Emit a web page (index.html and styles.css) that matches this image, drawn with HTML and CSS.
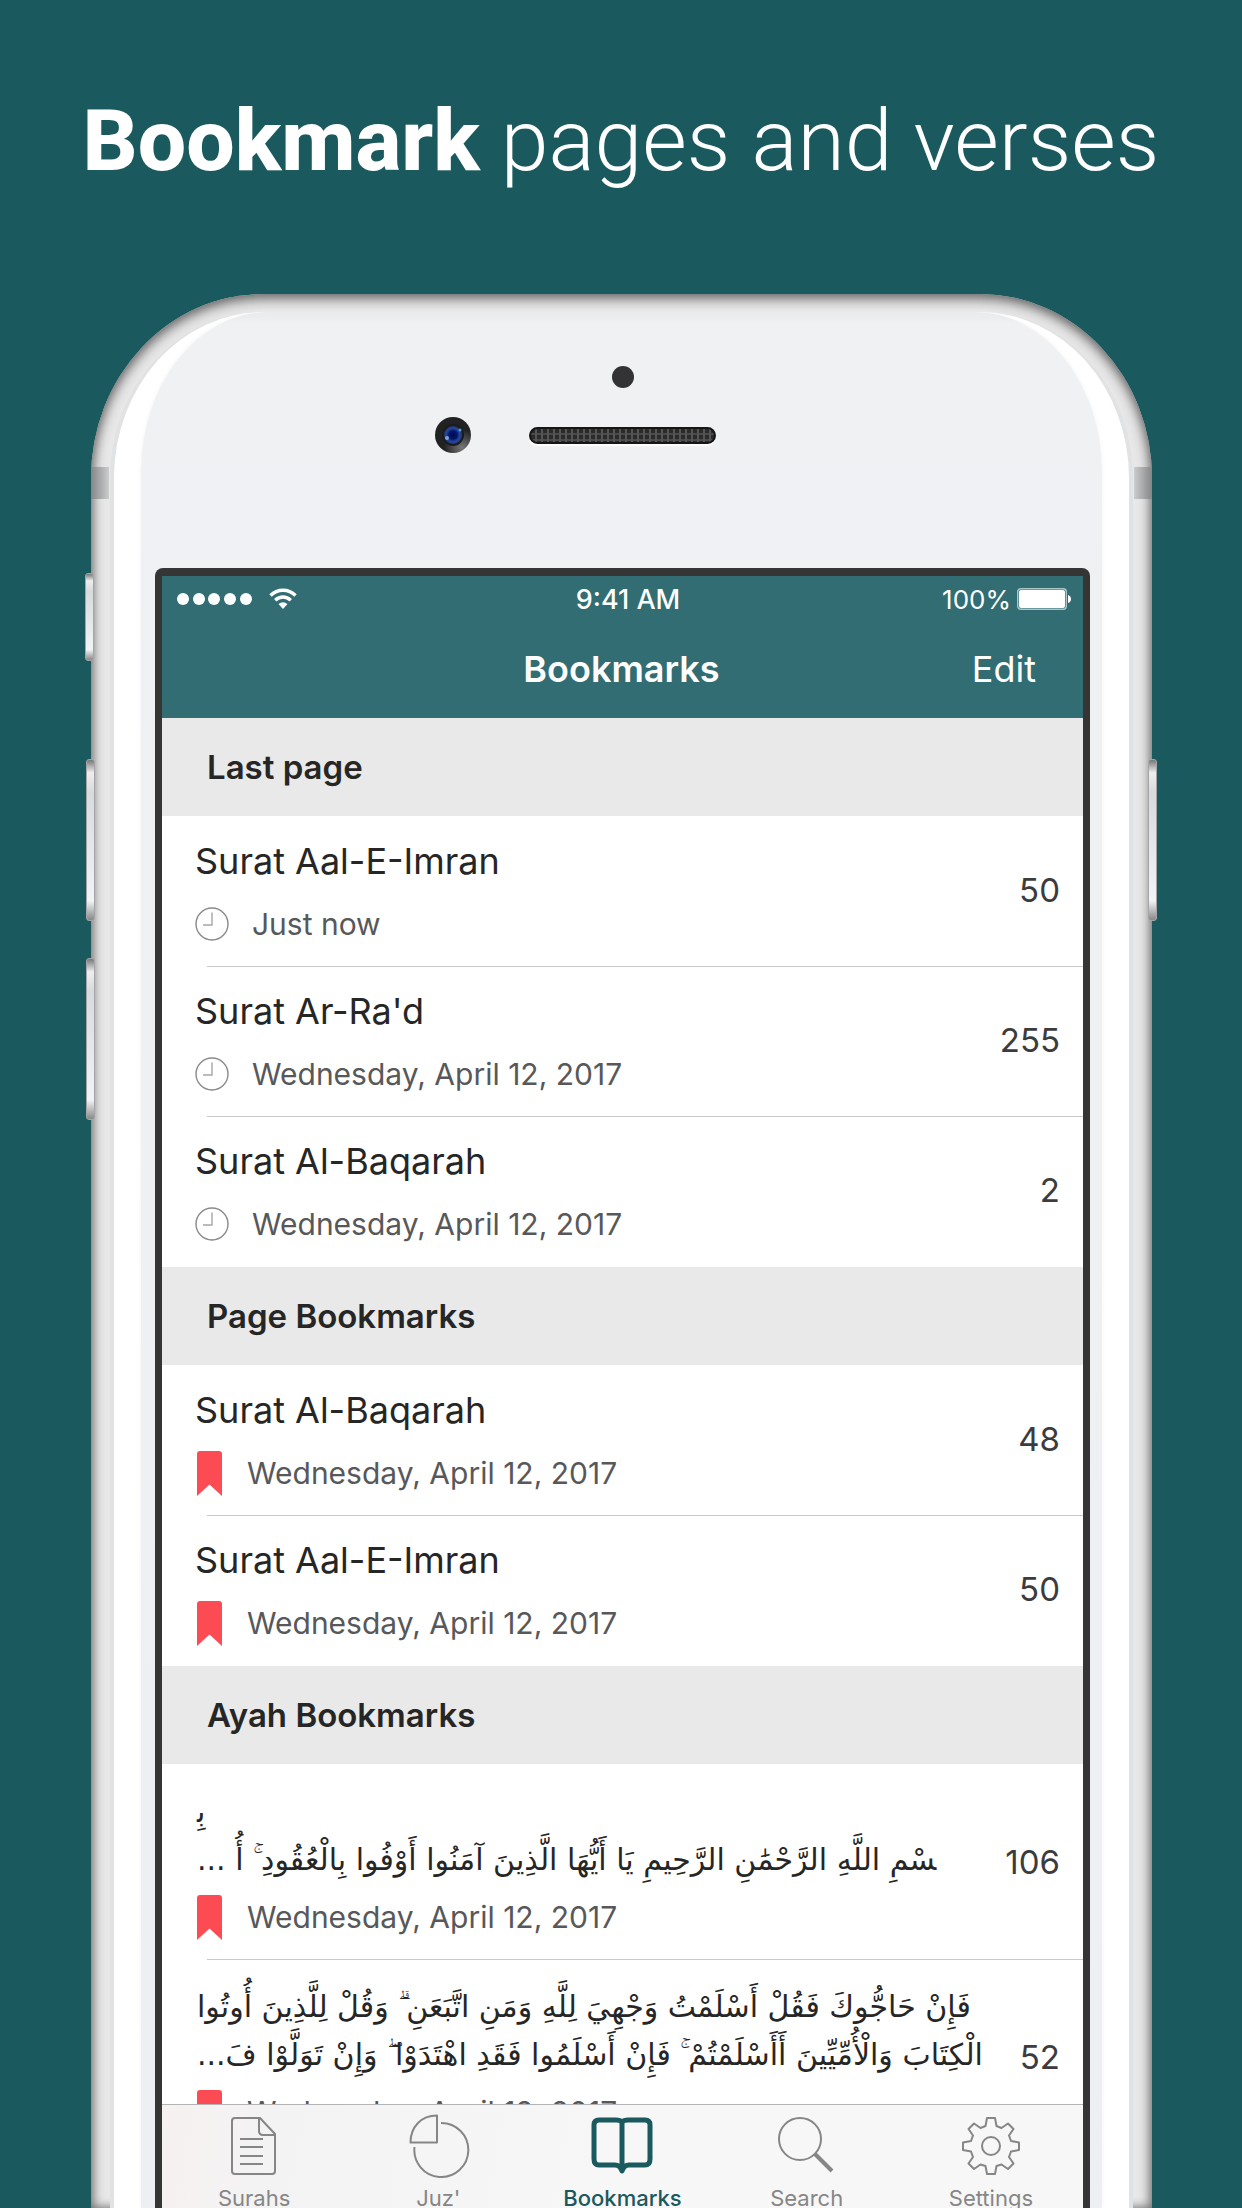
FILE: index.html
```html
<!DOCTYPE html>
<html lang="en">
<head>
<meta charset="utf-8">
<meta name="viewport" content="width=device-width, initial-scale=1">
<title>Bookmark pages and verses</title>
<link rel="stylesheet" href="styles.css">
</head>
<body>
<svg class="sprite" aria-hidden="true">
  <symbol id="clock" viewBox="0 0 34 34"><circle cx="17" cy="17" r="16" fill="none" stroke="#8a8a8a" stroke-width="1.4"/><path d="M17 5.500V18H8" fill="none" stroke="#a5a5a5" stroke-width="1.400"/></symbol>
  <symbol id="ribbon" viewBox="0 0 25 45"><path d="M0 3Q0 0 3 0H22Q25 0 25 3V45L12.500 33.500 0 45Z" fill="#fd4b54"/></symbol>
</svg>
<main class="stage">
  <h1 class="headline"><strong>Bookmark</strong> pages and verses</h1>
  <div class="phone">
    <span class="key key-mute"></span>
    <span class="key key-up"></span>
    <span class="key key-down"></span>
    <span class="key key-power"></span>
    <span class="band band-left"></span>
    <span class="band band-right"></span>
    <div class="glass">
      <div class="face">
        <div class="forehead">
          <span class="sensor"></span>
          <svg class="camera" viewBox="0 0 36 36" aria-hidden="true">
            <defs>
              <radialGradient id="rim" cx=".75" cy=".85" r=".5"><stop offset="0" stop-color="#777"/><stop offset="1" stop-color="#222"/></radialGradient>
              <radialGradient id="lens"><stop offset="0" stop-color="#020c4a"/><stop offset=".45" stop-color="#04156a"/><stop offset=".75" stop-color="#2448a0"/><stop offset="1" stop-color="#24366c"/></radialGradient>
            </defs>
            <circle cx="18" cy="18" r="18" fill="url(#rim)"/><circle cx="18" cy="18" r="11" fill="#1c1c1e"/>
            <circle cx="18" cy="18" r="9" fill="url(#lens)"/><circle cx="12" cy="21" r="2" fill="#7aa4d8"/><circle cx="25" cy="13" r="1.500" fill="#5aa0d8"/>
          </svg>
          <span class="speaker"></span>
        </div>
        <div class="screen">
          <header class="topbar">
            <div class="status">
              <span class="signal">
                <svg width="76" height="12" viewBox="0 0 76 12" fill="#fff" aria-label="Signal"><circle cx="6" cy="6" r="6"/><circle cx="22" cy="6" r="6"/><circle cx="37" cy="6" r="6"/><circle cx="53" cy="6" r="6"/><circle cx="69" cy="6" r="6"/></svg>
                <svg width="28" height="22" viewBox="0 0 28 22" fill="none" stroke="#fff" stroke-width="3.400" aria-label="Wi-Fi"><path d="M1.500 7.500C8.500 0.500 19.500 0.500 26.500 7.500M6.200 12.200C10.800 7.900 17.200 7.900 21.800 12.200"/><path d="M9.500 16Q14 12.500 18.500 16L14 21Z" fill="#fff" stroke="none"/></svg>
              </span>
              <span class="time">9:41 AM</span>
              <span class="power">100%
                <svg width="54" height="22" viewBox="0 0 54 22" aria-label="Battery"><rect x=".7" y=".7" width="48.600" height="20.600" rx="3" fill="none" stroke="#aac6c8" stroke-width="1.400"/><rect x="2" y="2" width="46" height="18" rx="2" fill="#fff"/><path d="M51 7Q54 8 54 11T51 15Z" fill="#fff"/></svg>
              </span>
            </div>
            <nav class="navbar">
              <h2 class="nav-title">Bookmarks</h2>
              <button class="edit" type="button">Edit</button>
            </nav>
          </header>
          <div class="list">
            <section>
              <h3 class="section-title">Last page</h3>
              <ul class="rows">
                <li class="row"><div class="entry"><p class="name">Surat Aal-E-Imran</p><p class="meta"><svg class="clock"><use href="#clock"/></svg>Just now</p></div><span class="page">50</span></li>
                <li class="row"><div class="entry"><p class="name">Surat Ar-Ra'd</p><p class="meta"><svg class="clock"><use href="#clock"/></svg>Wednesday, April 12, 2017</p></div><span class="page">255</span></li>
                <li class="row"><div class="entry"><p class="name">Surat Al-Baqarah</p><p class="meta"><svg class="clock"><use href="#clock"/></svg>Wednesday, April 12, 2017</p></div><span class="page">2</span></li>
              </ul>
            </section>
            <section>
              <h3 class="section-title">Page Bookmarks</h3>
              <ul class="rows">
                <li class="row"><div class="entry"><p class="name">Surat Al-Baqarah</p><p class="meta"><svg class="ribbon"><use href="#ribbon"/></svg>Wednesday, April 12, 2017</p></div><span class="page">48</span></li>
                <li class="row"><div class="entry"><p class="name">Surat Aal-E-Imran</p><p class="meta"><svg class="ribbon"><use href="#ribbon"/></svg>Wednesday, April 12, 2017</p></div><span class="page">50</span></li>
              </ul>
            </section>
            <section>
              <h3 class="section-title">Ayah Bookmarks</h3>
              <ul class="rows">
                <li class="row row-ayah"><div class="entry"><p class="ayah" lang="ar" dir="rtl">بِ&zwj;<br>&zwj;سْمِ اللَّهِ الرَّحْمَٰنِ الرَّحِيمِ يَا أَيُّهَا الَّذِينَ آمَنُوا أَوْفُوا بِالْعُقُودِ ۚ أُ ...</p><p class="meta"><svg class="ribbon"><use href="#ribbon"/></svg>Wednesday, April 12, 2017</p></div><span class="page">106</span></li>
                <li class="row row-ayah"><div class="entry"><p class="ayah" lang="ar" dir="rtl">فَإِنْ حَاجُّوكَ فَقُلْ أَسْلَمْتُ وَجْهِيَ لِلَّهِ وَمَنِ اتَّبَعَنِ ۗ وَقُلْ لِلَّذِينَ أُوتُوا<br>الْكِتَابَ وَالْأُمِّيِّينَ أَأَسْلَمْتُمْ ۚ فَإِنْ أَسْلَمُوا فَقَدِ اهْتَدَوْا ۖ وَإِنْ تَوَلَّوْا فَ...</p><p class="meta"><svg class="ribbon"><use href="#ribbon"/></svg>Wednesday, April 12, 2017</p></div><span class="page">52</span></li>
              </ul>
            </section>
          </div>
          <nav class="tabs">
            <a class="tab" href="#surahs"><svg viewBox="0 0 64 64"><path d="M13 4H38L53 20V57Q53 60 50 60H13Q10 60 10 57V7Q10 4 13 4ZM37 4V17Q37 21 41 21H53M18 25H41M18 33H41M18 42H41M18 50H41"/></svg>Surahs</a>
            <a class="tab" href="#juz"><svg viewBox="0 0 64 64"><path d="M31 1.500V28.500H4.500C4.500 13 15 1.500 31 1.500ZM35 9A27 27 0 1 1 8.500 33"/></svg>Juz'</a>
            <a class="tab tab-active" href="#bookmarks"><svg viewBox="0 0 64 64"><path d="M32 8Q30 6 26 6H9Q4 6 4 11V45Q4 51 9 51H25Q30 51 32 57Q34 51 39 51H55Q60 51 60 45V11Q60 6 55 6H38Q34 6 32 8ZM32 8V56"/></svg>Bookmarks</a>
            <a class="tab" href="#search"><svg viewBox="0 0 64 64"><circle cx="25" cy="25" r="21"/><path d="M40 40L57 57" stroke-width="4"/></svg>Search</a>
            <a class="tab" href="#settings"><svg viewBox="0 0 64 64"><circle cx="32" cy="32" r="9"/><path d="M28 4H36L37.500 12L42.500 14L49 9.500L54.500 15L50 21.500L52 27L60 28.500V36L52 37.500L50 43L54.500 49.500L49 55L42.500 50.500L37.500 52L36 60H28L26.500 52L21.500 50.500L15 55L9.500 49.500L14 43L12 37.500L4 36V28.500L12 27L14 21.500L9.500 15L15 9.500L21.500 14L26.500 12Z"/></svg>Settings</a>
          </nav>
        </div>
      </div>
    </div>
  </div>
</main>
</body>
</html>
```
FILE: styles.css
```css
* { box-sizing: border-box; }
body, h1, h2, h3, p, ul { margin: 0; padding: 0; }
body {
  background: #1a595d;
  color: #262626;
  font-family: Inter, "Liberation Sans", sans-serif;
}
svg { display: block; flex: none; }
.sprite { position: absolute; width: 0; height: 0; }

.stage {
  display: flex;
  flex-direction: column;
  height: 100vh;
  padding-top: 91px;
  overflow: hidden;
}
.headline {
  margin-bottom: 103px;
  color: #fff;
  font: 300 86px/100px Roboto, sans-serif;
  text-align: center;
  white-space: nowrap;
}
.headline strong { font-weight: 800; }

/* Device */
.phone {
  position: relative;
  display: flex;
  flex: 1;
  min-height: 0;
  margin: 0 90px 0 91px;
  padding: 17px 19px 0;
  border-radius: 172px 172px 0 0 / 184px 184px 0 0;
  background: #e8e8e8;
  box-shadow: inset 0 4px 14px #6a6a6a, inset 0 0 10px #8a8a8a;
}
.glass {
  display: flex;
  flex: 1;
  min-width: 0;
  border: solid #e0e2e4;
  border-width: 1px 4px 0;
  border-radius: 153px 153px 0 0 / 167px 167px 0 0;
  background: #fff;
}
.face {
  display: flex;
  flex: 1;
  flex-direction: column;
  min-width: 0;
  margin: 0 27px;
  padding: 0 12px 0 14px;
  border-radius: 127px 127px 0 0 / 160px 160px 0 0;
  background: linear-gradient(#e9eaec, #f0f1f3 12px, #eeeff2);
  box-shadow: 0 0 4px #f2f3f4;
}
.forehead {
  display: grid;
  grid-template-columns: 1fr 187px 1fr;
  grid-template-rows: 22px 36px;
  row-gap: 29px;
  align-items: center;
  height: 256px;
  padding-top: 54px;
  align-content: start;
}
.sensor {
  grid-column: 2;
  justify-self: center;
  width: 22px;
  height: 22px;
  border-radius: 50%;
  background: #333336;
}
.camera {
  grid-column: 1;
  justify-self: end;
  width: 36px;
  height: 36px;
  margin-right: 58px;
}
.speaker {
  height: 17px;
  border: 2px solid #161617;
  border-radius: 9px;
  background:
    repeating-linear-gradient(90deg, transparent 0 4px, #555 4px 6px),
    repeating-linear-gradient(#2b2b2b 0 4px, #4a4a4a 4px 6px);
  box-shadow: 0 2px 1px #fff;
}
.key {
  position: absolute;
  width: 9px;
  border: 1px solid #a5a5a8;
  border-radius: 3px;
  background: linear-gradient(#777, #eee 8%, #d9dadd 20%, #f2f3f6 88%, #888);
}
.key-mute { top: 279px; left: -6px; height: 88px; }
.key-up { top: 465px; left: -5px; height: 162px; }
.key-down { top: 664px; left: -5px; height: 162px; }
.key-power { top: 465px; right: -5px; height: 162px; }
.band { position: absolute; top: 173px; width: 18px; height: 32px; }
.band-left { left: 0; background: linear-gradient(90deg, #858688, #cbcccc); }
.band-right { right: 0; background: linear-gradient(270deg, #858688, #cbcccc); }

/* Screen */
.screen {
  display: flex;
  flex: 1;
  flex-direction: column;
  min-height: 0;
  border: solid #353535;
  border-width: 8px 7px 0;
  border-radius: 8px 8px 0 0;
  background: #fff;
  overflow: hidden;
}
.topbar {
  height: 142px;
  background: #316d73;
  color: #fff;
}
.status {
  display: grid;
  grid-template-columns: 1fr auto 1fr;
  align-items: center;
  height: 46px;
  padding: 0 12px 0 15px;
  font-size: 26px;
}
.signal { display: flex; align-items: center; gap: 16px; }
.time { padding-left: 8px; font-size: 27px; font-weight: 500; }
.power { display: flex; align-items: center; justify-content: flex-end; gap: 6px; }
.navbar {
  display: grid;
  grid-template-columns: 1fr auto 1fr;
  align-items: center;
  height: 94px;
  padding: 0 47px 0 45px;
}
.nav-title { grid-column: 2; font-size: 36px; font-weight: 600; }
.edit {
  justify-self: end;
  padding: 0;
  border: 0;
  background: none;
  color: inherit;
  font: 400 36px/48px Inter, sans-serif;
}
.list { flex: 1; min-height: 0; overflow: hidden; }
.section-title {
  padding: 1px 0 1px 45px;
  background: #e9e9e9;
  font-size: 33px;
  font-weight: 600;
  line-height: 96px;
}
.rows { padding-bottom: 1px; list-style: none; }
.row {
  display: flex;
  align-items: center;
  position: relative;
  padding: 21px 23px 23px 33px;
}
.row + .row::before {
  content: "";
  position: absolute;
  top: 0;
  right: 0;
  left: 45px;
  height: 1px;
  background: #c9c9cb;
}
.entry { flex: 1; min-width: 0; }
.name { font-size: 36px; line-height: 48px; }
.meta {
  display: flex;
  align-items: center;
  height: 38px;
  margin-top: 20px;
  color: #58585a;
  font-size: 30px;
  white-space: nowrap;
}
.clock { width: 34px; height: 34px; margin-right: 23px; }
.ribbon { width: 25px; height: 45px; margin: 0 25px 0 2px; }
.page { color: #3c3c3e; font-size: 33px; }

/* Verses keep their own line breaks and sit against the left edge */
.ayah {
  padding-left: 2px;
  font: 30px/48px "DejaVu Sans", sans-serif;
  text-align: left;
  white-space: nowrap;
}
.row-ayah { padding-top: 24px; }
.row-ayah .meta { margin-top: 14px; }

/* Tab bar */
.tabs {
  display: grid;
  grid-template-columns: repeat(5, 1fr);
  flex: none;
  height: 104px;
  border-top: 1px solid #b4b4b6;
  background: linear-gradient(100deg, #f7f1f1, #f3f3f3 12%, #f7f7f7 50%);
}
.tab {
  display: flex;
  flex-direction: column;
  align-items: center;
  padding-top: 9px;
  color: #868686;
  font-size: 22px;
  line-height: 40px;
  text-decoration: none;
}
.tab svg {
  width: 64px;
  height: 64px;
  fill: none;
  stroke: currentColor;
  stroke-width: 2;
  stroke-linejoin: round;
}
.tab-active { color: #1a595d; font-weight: 500; }
.tab-active svg { stroke-width: 5; }
```
